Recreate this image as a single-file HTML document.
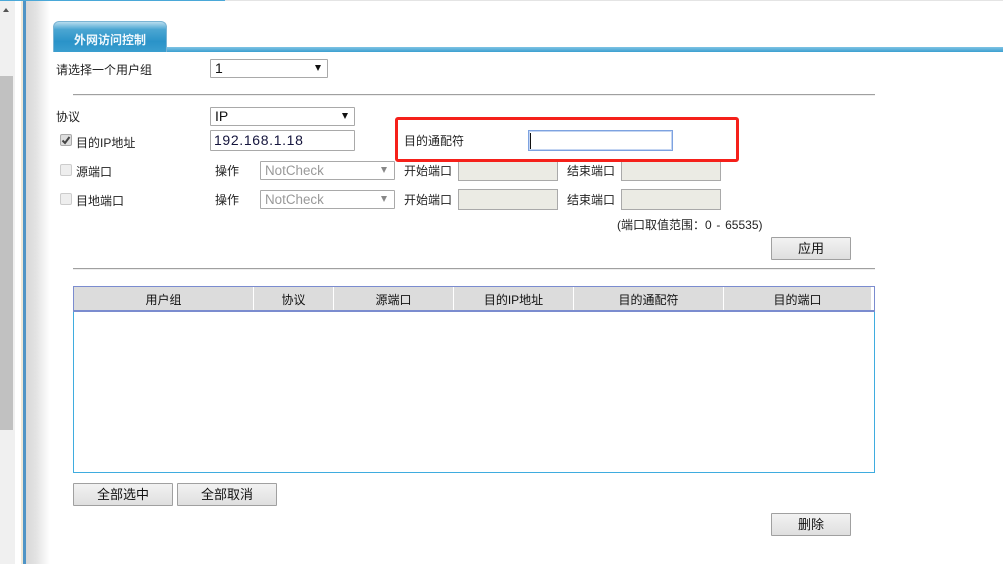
<!DOCTYPE html>
<html><head><meta charset="utf-8"><style>
html,body{margin:0;padding:0;background:#fff}
body{width:1003px;height:564px;position:relative;overflow:hidden;font-family:"Liberation Sans","Noto Sans CJK SC",sans-serif;font-size:12px;color:#222}
.a{position:absolute}
.t{position:absolute;white-space:nowrap;line-height:16px;font-size:12px}
.sel,.inp{position:absolute;box-sizing:border-box;border:1px solid #a9a9a9;background:#fff;font-size:14px;line-height:17px;padding-left:4px;color:#111;height:19px;border-radius:1px}
.dis{color:#999;height:19px;font-size:13.4px;line-height:18px}
.gr{position:absolute;box-sizing:border-box;border:1px solid #a9a9a9;background:#ebebe4;height:20px;width:100px}
.ar{position:absolute;width:0;height:0;border-left:3.5px solid transparent;border-right:3.5px solid transparent;border-top:6px solid #111}
.dis .ar{border-top-color:#888}
.cb{position:absolute;box-sizing:border-box;width:12px;height:12px;border:1px solid #ccc;border-radius:2px;background:#eee}
.hr{position:absolute;left:73px;width:802px;height:1px;background:#a0a0a0;border-bottom:1px solid #eee}
.btn{position:absolute;box-sizing:border-box;border:1px solid #a0a0a0;background:linear-gradient(#f2f2f2,#dfdfdf);height:23px;text-align:center;font-size:13px;line-height:21px;color:#111;border-radius:1px}
.th{position:absolute;top:287px;height:23px;line-height:26px;text-align:center;font-size:12px;color:#111;background:#dcdcdc;border-right:1px solid #fff;box-sizing:border-box}
</style></head><body>
<div class="a" style="left:0;top:0;width:15px;height:564px;background:#f0f0f0"></div>
<div class="a" style="left:0;top:76px;width:13px;height:354px;background:#c1c1c1"></div>
<div class="a" style="left:3px;top:8px;width:0;height:0;border-left:3.5px solid transparent;border-right:3.5px solid transparent;border-bottom:4px solid #555"></div>
<div class="a" style="left:21px;top:0;width:2px;height:564px;background:#efe8d8"></div>
<div class="a" style="left:23px;top:0;width:3px;height:564px;background:#4f94c6"></div>
<div class="a" style="left:26px;top:0;width:24px;height:564px;background:linear-gradient(90deg,#d8d8d8,#e4e4e4 45%,#fff)"></div>
<div class="a" style="left:0;top:0;width:225px;height:1px;background:#4aa8d8"></div>
<div class="a" style="left:225px;top:0;width:778px;height:1px;background:#e4e4e4"></div>

<div class="a" style="left:53px;top:47px;width:950px;height:5px;background:linear-gradient(#7fc3e4,#3c9fd0)"></div>
<div class="a" style="left:53px;top:21px;width:114px;height:31px;box-sizing:border-box;border-radius:6px 6px 0 0;border:1px solid #7ab4d4;border-bottom:0;background:linear-gradient(#b7dcee 0,#4ba6d2 25%,#2a93c8 65%,#3a9ecf 100%);color:#eef7fc;font-size:12px;font-weight:bold;text-align:center;line-height:36px">外网访问控制</div>

<div class="t" style="left:56px;top:62px">请选择一个用户组</div>
<div class="sel" style="left:210px;top:59px;width:118px">1<div class="ar" style="left:104px;top:5px"></div></div>
<div class="hr" style="top:94px"></div>

<div class="t" style="left:56px;top:109px">协议</div>
<div class="sel" style="left:210px;top:107px;width:145px">IP<div class="ar" style="left:131px;top:5px"></div></div>
<div class="cb" style="left:60px;top:134px;background:#ddd;border-color:#aaa"></div>
<svg class="a" style="left:60px;top:134px" width="12" height="12"><path d="M2.5 6.5 L5 9 L9.5 3" fill="none" stroke="#444" stroke-width="2"/></svg>
<div class="t" style="left:76px;top:135px">目的IP地址</div>
<div class="inp" style="left:210px;top:130px;width:145px;height:21px;padding-left:3px;color:#14143c;line-height:19px;letter-spacing:.65px">192.168.1.18</div>

<div class="cb" style="left:60px;top:164px"></div>
<div class="t" style="left:76px;top:164px">源端口</div>
<div class="t" style="left:215px;top:163px">操作</div>
<div class="sel dis" style="left:260px;top:161px;width:135px">NotCheck<div class="ar" style="left:120px;top:5px"></div></div>
<div class="t" style="left:404px;top:163px">开始端口</div>
<div class="gr" style="left:458px;top:161px"></div>
<div class="t" style="left:567px;top:163px">结束端口</div>
<div class="gr" style="left:621px;top:161px"></div>

<div class="cb" style="left:60px;top:193px"></div>
<div class="t" style="left:76px;top:193px">目地端口</div>
<div class="t" style="left:215px;top:192px">操作</div>
<div class="sel dis" style="left:260px;top:190px;width:135px">NotCheck<div class="ar" style="left:120px;top:5px"></div></div>
<div class="t" style="left:404px;top:192px">开始端口</div>
<div class="gr" style="left:458px;top:189px;height:21px"></div>
<div class="t" style="left:567px;top:192px">结束端口</div>
<div class="gr" style="left:621px;top:189px;height:21px"></div>

<div class="t" style="left:617px;top:217px;word-spacing:1.4px">(端口取值范围：0 - 65535)</div>
<div class="btn" style="left:771px;top:237px;width:80px">应用</div>
<div class="hr" style="top:268px"></div>

<div class="a" style="left:395px;top:117px;width:344px;height:45px;box-sizing:border-box;border:3px solid #f5201a;border-radius:3px;background:#fff"></div>
<div class="t" style="left:404px;top:133px">目的通配符</div>
<div class="a" style="left:528px;top:130px;width:145px;height:21px;box-sizing:border-box;border:1px solid #7da2e0;box-shadow:inset 0 0 0 1px #c4d5f2;background:#fff"></div>
<div class="a" style="left:530px;top:133px;width:1px;height:16px;background:#111"></div>

<div class="a" style="left:73px;top:286px;width:802px;height:187px;box-sizing:border-box;border:1px solid #3facdf;background:#fff"></div>
<div class="a" style="left:73px;top:286px;width:802px;height:26px;box-sizing:border-box;border:1px solid #7b8ccf;border-bottom:0;background:#fff"></div>
<div class="th" style="left:74px;width:180px">用户组</div>
<div class="th" style="left:254px;width:80px">协议</div>
<div class="th" style="left:334px;width:120px">源端口</div>
<div class="th" style="left:454px;width:120px">目的IP地址</div>
<div class="th" style="left:574px;width:150px">目的通配符</div>
<div class="th" style="left:724px;width:148px">目的端口</div>
<div class="a" style="left:73px;top:310px;width:802px;height:2px;background:#7b8ccf"></div>

<div class="btn" style="left:73px;top:483px;width:100px">全部选中</div>
<div class="btn" style="left:177px;top:483px;width:100px">全部取消</div>
<div class="btn" style="left:771px;top:513px;width:80px">删除</div>
</body></html>
